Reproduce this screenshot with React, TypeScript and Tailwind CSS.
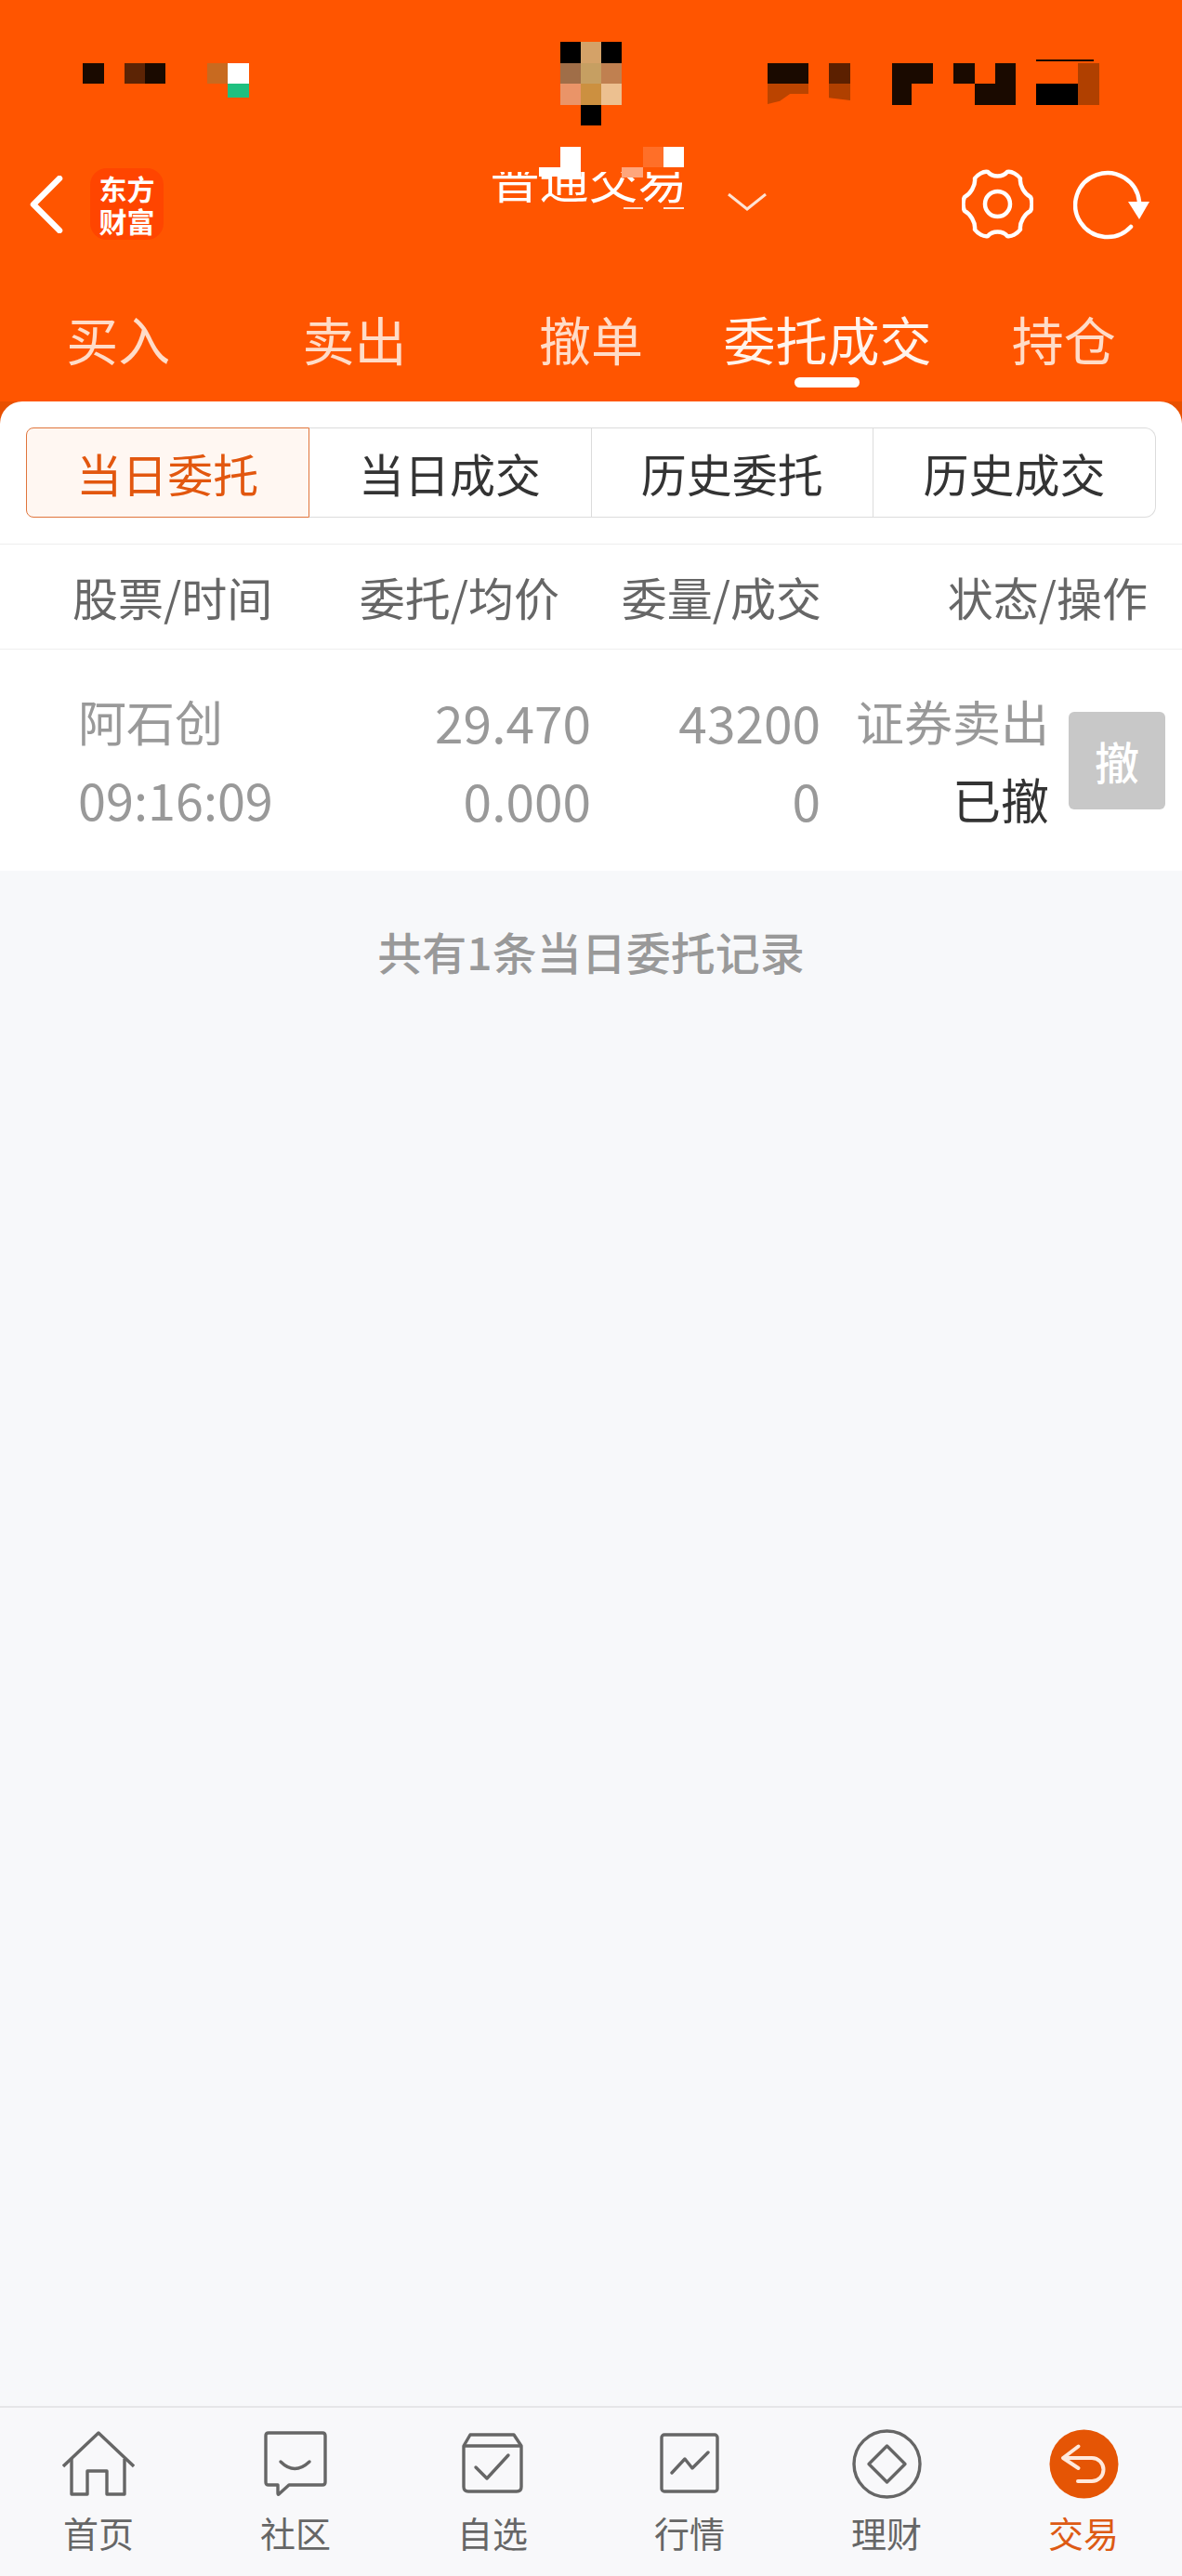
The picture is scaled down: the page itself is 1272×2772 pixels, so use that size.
const cjk = "font-['Noto_Sans_CJK_SC','Noto_Sans',sans-serif]";

// mosaic blocks over the status bar and the title
const mosaics = [
  "left-[89px] top-[68px] w-[23px] h-[22px] bg-[#1a0a00]",
  "left-[134px] top-[68px] w-[22px] h-[22px] bg-[#5c2405]",
  "left-[156px] top-[68px] w-[22px] h-[22px] bg-[#1a0a00]",
  "left-[223px] top-[68px] w-[22px] h-[22px] bg-[#c86a20]",
  "left-[245px] top-[68px] w-[23px] h-[22px] bg-white",
  "left-[245px] top-[90px] w-[23px] h-[15px] bg-[#1fc080]",
  "left-[603px] top-[45px] w-[22px] h-[23px] bg-black",
  "left-[625px] top-[45px] w-[22px] h-[23px] bg-[#d4a268]",
  "left-[647px] top-[45px] w-[22px] h-[23px] bg-black",
  "left-[603px] top-[68px] w-[22px] h-[22px] bg-[#a06e48]",
  "left-[625px] top-[68px] w-[22px] h-[22px] bg-[#c69f62]",
  "left-[647px] top-[68px] w-[22px] h-[22px] bg-[#c08050]",
  "left-[603px] top-[90px] w-[22px] h-[23px] bg-[#ea9468]",
  "left-[625px] top-[90px] w-[22px] h-[23px] bg-[#cc9040]",
  "left-[647px] top-[90px] w-[22px] h-[23px] bg-[#ecc090]",
  "left-[625px] top-[113px] w-[22px] h-[22px] bg-black",
  "left-[826px] top-[68px] w-[44px] h-[22px] bg-[#1a0a00]",
  "left-[826px] top-[90px] w-[44px] h-[22px] bg-[#bb4400] [clip-path:polygon(0_0,100%_0,100%_50%,55%_50%,30%_85%,0_100%)]",
  "left-[892px] top-[68px] w-[23px] h-[22px] bg-[#5c2000]",
  "left-[892px] top-[90px] w-[23px] h-[18px] bg-[#b04000] [clip-path:polygon(0_0,100%_0,100%_100%,0_85%)]",
  "left-[960px] top-[68px] w-[44px] h-[22px] bg-[#1a0a00]",
  "left-[960px] top-[90px] w-[21px] h-[23px] bg-[#1a0a00]",
  "left-[1026px] top-[68px] w-[23px] h-[22px] bg-[#1a0a00]",
  "left-[1071px] top-[68px] w-[22px] h-[22px] bg-[#1a0a00]",
  "left-[1049px] top-[90px] w-[44px] h-[23px] bg-[#1a0a00]",
  "left-[1115px] top-[90px] w-[45px] h-[23px] bg-black",
  "left-[1160px] top-[68px] w-[23px] h-[45px] bg-[#b04000]",
  "left-[1115px] top-[64px] w-[62px] h-[2px] bg-[#1a0a00]",
  "left-[603px] top-[158px] w-[22px] h-[22px] bg-white",
  "left-[580px] top-[180px] w-[45px] h-[10px] bg-white",
  "left-[692px] top-[158px] w-[22px] h-[22px] bg-[#ff6f28]",
  "left-[714px] top-[158px] w-[22px] h-[22px] bg-white",
  "left-[669px] top-[180px] w-[23px] h-[11px] bg-[#ffa67c]",
  "left-[671px] top-[223px] w-[21px] h-[2px] bg-[#ffd9c4]",
  "left-[714px] top-[223px] w-[22px] h-[2px] bg-[#ffe9dc]",
];

const tabs = ["买入", "卖出", "撤单", "委托成交", "持仓"];
const filters = ["当日委托", "当日成交", "历史委托", "历史成交"];

function NavItem({ label, active, children }: { label: string; active?: boolean; children: React.ReactNode }) {
  return (
    <div className="flex-1 flex flex-col items-center">
      <div className="h-[76px] flex items-center justify-center">{children}</div>
      <span className={`text-[38px] leading-[50px] mt-[11px] ${active ? "text-[#dd5a14]" : "text-[#666666]"}`}>{label}</span>
    </div>
  );
}

export default function App() {
  return (
    <div className={`relative w-[1272px] h-[2772px] overflow-hidden bg-[#f7f8fa] flex flex-col ${cjk}`}>
      {mosaics.map((m) => (
        <div key={m} className={`absolute z-10 ${m}`} />
      ))}

      {/* Header */}
      <div className="h-[432px] shrink-0 bg-[#ff5500] flex flex-col">
        <div className="h-[181px] shrink-0" />
        <div className="h-[77px] shrink-0 flex items-center">
          <svg width="36" height="62" viewBox="0 0 36 62" className="ml-[32px]">
            <path d="M32 3 L4 31 L32 59" fill="none" stroke="white" strokeWidth="6.5" strokeLinecap="round" strokeLinejoin="round" />
          </svg>
          <div className="ml-[29px] w-[79px] h-[77px] rounded-[18px] bg-[#ff4500] flex flex-col items-center justify-center text-white font-bold text-[30px] leading-[35px]">
            <span>东方</span>
            <span>财富</span>
          </div>
          <div className="ml-[351px] w-[213px] h-[34px] self-start mt-[4px] overflow-hidden flex items-end justify-center">
            <span className="text-white text-[53px] leading-[56px] whitespace-nowrap">普通交易</span>
          </div>
          <svg width="42" height="19" viewBox="0 0 42 19" className="ml-[43px] mt-[-5px]">
            <path d="M1 1 L21 17 L41 1" fill="none" stroke="#ffe3d3" strokeWidth="3" />
          </svg>
          <svg width="77" height="75" viewBox="0 0 77 75" className="ml-[210px]">
            <path
              d="M28 3 C33 9 44 9 49 3 C54 2 60 6 63 10 C62 18 68 27 74 30 C76 34 76 41 74 45 C68 48 62 57 63 65 C60 69 54 73 49 72 C44 66 33 66 28 72 C23 73 17 69 14 65 C15 57 9 48 3 45 C1 41 1 34 3 30 C9 27 15 18 14 10 C17 6 23 2 28 3 Z"
              fill="none"
              stroke="white"
              strokeWidth="4.5"
              strokeLinejoin="round"
            />
            <circle cx="38.5" cy="37.5" r="13.5" fill="none" stroke="white" strokeWidth="4.5" />
          </svg>
          <svg width="82" height="76" viewBox="0 0 82 76" className="ml-[43px]">
            <path d="M71 35 A34.5 34.5 0 1 0 62 62" fill="none" stroke="white" strokeWidth="4.5" strokeLinecap="round" />
            <path d="M59 35 H82 L71 54 Z" fill="white" />
          </svg>
        </div>
        <div className="flex mt-[77px] h-[58px]">
          {tabs.map((t) => (
            <div key={t} className={`flex-1 text-center text-[56px] leading-[58px] ${t === "委托成交" ? "text-[#fff4ec]" : "text-[#ffdcc8]"}`}>
              {t}
            </div>
          ))}
        </div>
        <div className="flex mt-[13px]">
          <div className="w-[855px]" />
          <div className="w-[70px] h-[11px] rounded-full bg-white" />
        </div>
      </div>

      {/* Card */}
      <div className="shrink-0 bg-[#e85000]">
        <div className="rounded-t-[24px] bg-white">
          <div className="flex px-[28px] pt-[28px] pb-[28px]">
            {filters.map((f, i) => (
              <div
                key={f}
                className={`flex-1 h-[97px] flex items-center justify-center text-[49px] border ${
                  i === 0
                    ? "rounded-l-[8px] border-[#e0753c] bg-[#fff7f2] text-[#e2570f]"
                    : `border-[#dcdcdc] border-l-0 text-[#333333] ${i === 3 ? "rounded-r-[12px]" : ""}`
                }`}
              >
                {f}
              </div>
            ))}
          </div>
          <div className="h-[114px] border-t border-b border-[#eeeeee] flex items-center text-[49px] text-[#666666] whitespace-nowrap">
            <div className="w-[370px] pl-[78px]">股票/时间</div>
            <div className="w-[232px] flex justify-end">委托/均价</div>
            <div className="w-[282px] flex justify-end">委量/成交</div>
            <div className="flex-1 flex justify-end pr-[37px]">状态/操作</div>
          </div>
          <div className="h-[238px] flex items-center text-[52px] text-[#999999] whitespace-nowrap">
            <div className="w-[370px] pl-[84px] leading-[84px]">
              <div>阿石创</div>
              <div className="text-[54px]">09:16:09</div>
            </div>
            <div className="w-[266px] text-right leading-[84px] text-[55px]">
              <div>29.470</div>
              <div>0.000</div>
            </div>
            <div className="w-[247px] text-right leading-[84px] text-[55px]">
              <div>43200</div>
              <div>0</div>
            </div>
            <div className="w-[246px] text-right leading-[84px]">
              <div>证券卖出</div>
              <div className="text-[#333333]">已撤</div>
            </div>
            <div className="ml-[21px] w-[104px] h-[105px] rounded-[6px] bg-[#c8c8c8] text-white font-medium text-[48px] flex items-center justify-center">撤</div>
          </div>
        </div>
      </div>

      {/* Summary */}
      <div className="flex-1 pt-[60px] text-center text-[48px] leading-[52px] font-medium text-[#999999]">共有1条当日委托记录</div>

      {/* Bottom nav */}
      <div className="h-[183px] shrink-0 border-t-2 border-[#e6e6e8] bg-[#f8f8fa] flex pt-[22px]">
        <NavItem label="首页">
          <svg width="78" height="70" viewBox="0 0 78 70" fill="none" stroke="#666666" strokeWidth="3.4" strokeLinejoin="round">
            <path d="M1 38 L39 2 L77 38" />
            <path d="M10 30 V68 H27 V43 H48 V68 H67 V30" />
          </svg>
        </NavItem>
        <NavItem label="社区">
          <svg width="68" height="70" viewBox="0 0 68 70" fill="none" stroke="#666666" strokeWidth="3.4" strokeLinejoin="round">
            <path d="M5 2 H63 Q66 2 66 5 V55 Q66 58 63 58 H27 L16 68 Q15 69 15 66 V58 H5 Q2 58 2 55 V5 Q2 2 5 2 Z" />
            <path d="M18 33 Q33 48 49 33" strokeLinecap="round" />
          </svg>
        </NavItem>
        <NavItem label="自选">
          <svg width="66" height="66" viewBox="0 0 66 66" fill="none" stroke="#666666" strokeWidth="3.4" strokeLinejoin="round">
            <path d="M2 14 L9 2 H56 L64 14 V58 Q64 63 59 63 H7 Q2 63 2 58 Z" />
            <path d="M2 14 H64" />
            <path d="M15 37 L27 49 L50 24" strokeLinecap="round" />
          </svg>
        </NavItem>
        <NavItem label="行情">
          <svg width="64" height="66" viewBox="0 0 64 66" fill="none" stroke="#666666" strokeWidth="3.4" strokeLinejoin="round">
            <rect x="2" y="2" width="60" height="61" rx="3" />
            <path d="M13 43 L27 28 L35 38 L52 21" strokeLinecap="round" />
          </svg>
        </NavItem>
        <NavItem label="理财">
          <svg width="75" height="75" viewBox="0 0 75 75" fill="none" stroke="#666666" strokeWidth="3.4" strokeLinejoin="round">
            <circle cx="37.5" cy="37.5" r="35.5" />
            <path d="M37.5 18 L57 37.5 L37.5 57 L18 37.5 Z" />
          </svg>
        </NavItem>
        <NavItem label="交易" active>
          <svg width="75" height="75" viewBox="0 0 75 75" fill="none">
            <circle cx="37.5" cy="37.5" r="37" fill="#e55505" />
            <path d="M31.5 18.5 L15 31 L31.5 42 M15 31 H46 A12.5 12.5 0 0 1 46 56 H31" stroke="#ffe9dc" strokeWidth="4" strokeLinecap="round" strokeLinejoin="round" />
          </svg>
        </NavItem>
      </div>
    </div>
  );
}
